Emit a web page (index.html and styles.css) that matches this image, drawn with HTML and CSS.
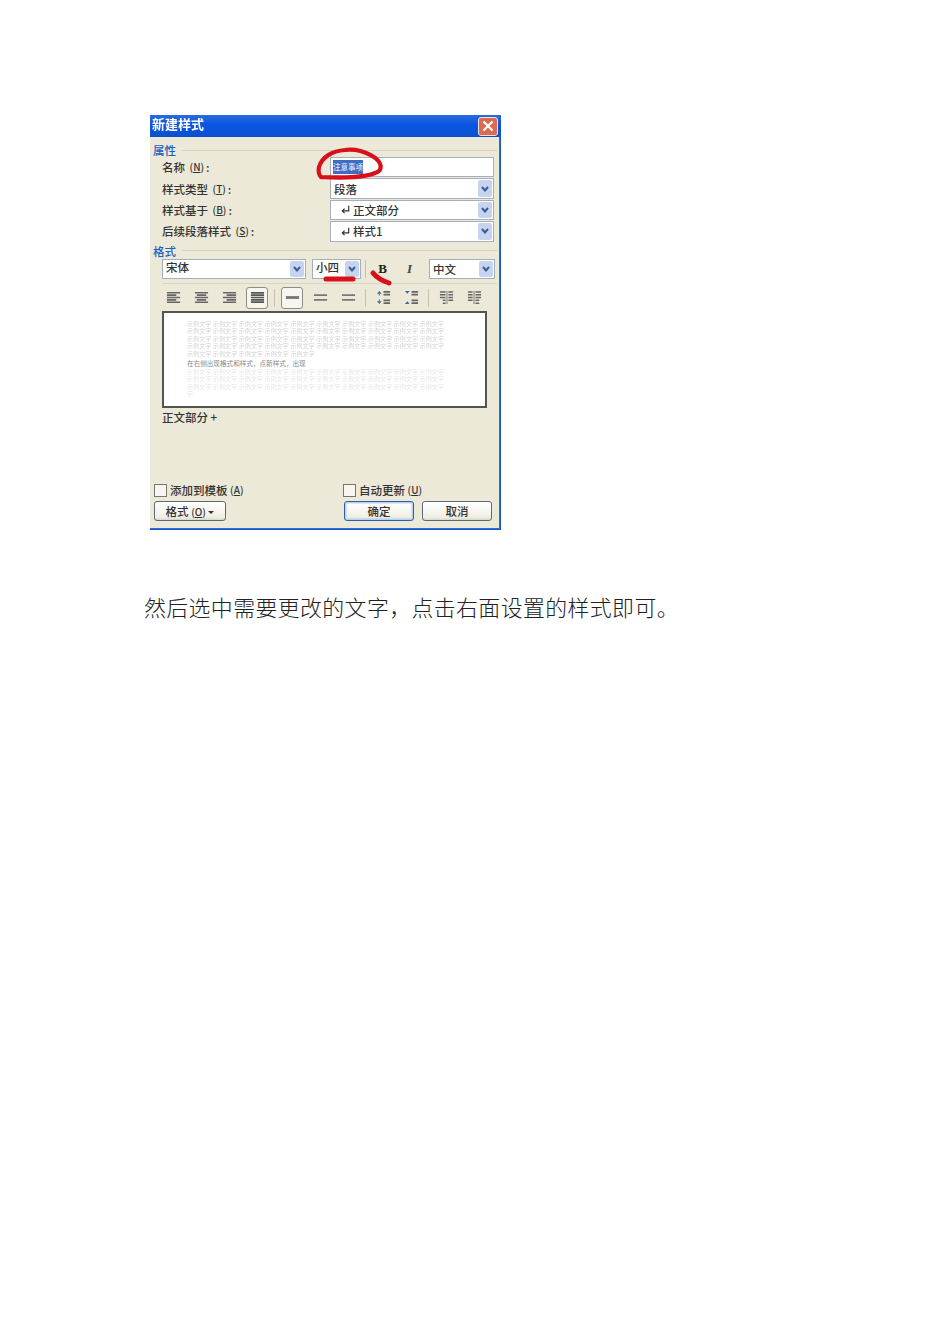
FILE: index.html
```html
<!DOCTYPE html>
<html lang="zh">

<head>
  <meta charset="UTF-8">
  <meta name="viewport" content="width=device-width, initial-scale=1.0">
  <title>新建样式</title>
  <link rel="stylesheet" href="styles.css">
</head>

<body>
  <svg class="icon-defs" width="0" height="0">
    <symbol id="chevron" viewBox="0 0 10 10">
      <path d="M2 3 L5 6.5 L8 3" fill="none" stroke="#3a5a9a" stroke-width="2" />
    </symbol>
    <symbol id="return" viewBox="0 0 12 12">
      <path d="M9.5 2 V7.5 H3 M5 5 L2.5 7.5 L5 10" fill="none" stroke="#333" stroke-width="1.3" />
    </symbol>
    <symbol id="align-left" viewBox="0 0 16 14">
      <path d="M1 2 H15 M1 4.5 H11 M1 7 H15 M1 9.5 H11 M1 12 H15" stroke="#666" stroke-width="1.7" />
    </symbol>
    <symbol id="align-center" viewBox="0 0 16 14">
      <path d="M1 2 H15 M3 4.5 H13 M1 7 H15 M3 9.5 H13 M1 12 H15" stroke="#666" stroke-width="1.7" />
    </symbol>
    <symbol id="align-right" viewBox="0 0 16 14">
      <path d="M1 2 H15 M5 4.5 H15 M1 7 H15 M5 9.5 H15 M1 12 H15" stroke="#666" stroke-width="1.7" />
    </symbol>
    <symbol id="align-full" viewBox="0 0 16 14">
      <path d="M1 2 H15 M1 4.5 H15 M1 7 H15 M1 9.5 H15 M1 12 H15" stroke="#555" stroke-width="1.8" />
    </symbol>
    <symbol id="space-one" viewBox="0 0 16 14">
      <path d="M1 7 H15" stroke="#777" stroke-width="3" />
    </symbol>
    <symbol id="space-two" viewBox="0 0 16 14">
      <path d="M1 4.5 H15 M1 9.5 H15" stroke="#777" stroke-width="1.8" />
    </symbol>
    <symbol id="para-up" viewBox="0 0 16 16">
      <path d="M8 2 H15 M8 5 H15 M8 11 H15 M8 14 H15" stroke="#666" stroke-width="1.8" />
      <path d="M1 4 L3.5 1 L6 4 Z M1 12 L3.5 15 L6 12 Z" fill="#3f6a8f" />
      <path d="M3.5 4 V6 M3.5 10 V12" stroke="#3f6a8f" />
    </symbol>
    <symbol id="para-down" viewBox="0 0 16 16">
      <path d="M8 2 H15 M8 5 H15 M8 11 H15 M8 14 H15" stroke="#666" stroke-width="1.8" />
      <path d="M1 1 L3.5 4 L6 1 Z M1 15 L3.5 12 L6 15 Z" fill="#3f6a8f" />
    </symbol>
    <symbol id="indent-less" viewBox="0 0 16 16">
      <path d="M1 2 H7 M1 5 H7 M1 8 H7 M4 11 H7 M4 14 H7 M10 2 H15 M10 5 H15 M10 8 H15 M10 11 H15" stroke="#666" stroke-width="1.6" />
      <path d="M8.5 1 V15" stroke="#777" />
    </symbol>
    <symbol id="indent-more" viewBox="0 0 16 16">
      <path d="M1 2 H6 M1 5 H6 M1 8 H6 M1 11 H6 M9 2 H15 M9 5 H15 M9 8 H15 M9 11 H13 M9 14 H13" stroke="#666" stroke-width="1.6" />
      <path d="M7.5 1 V15" stroke="#777" />
    </symbol>
  </svg>

  <div class="page">
    <div class="dialog">
      <div class="title-bar">
        <span class="title">新建样式</span>
        <span class="close-btn">
          <svg viewBox="0 0 12 12" width="12" height="12">
            <path d="M1.5 1.5 L10.5 10.5 M10.5 1.5 L1.5 10.5" stroke="#fff" stroke-width="2.2" />
          </svg>
        </span>
      </div>

      <div class="dialog-body">
        <div class="legend"><span>属性</span></div>
        <div class="fields">
          <label>名称 <small>(<u>N</u>)</small>:</label>
          <div class="input"><span class="selected">注意事项</span></div>
          <label>样式类型 <small>(<u>T</u>)</small>:</label>
          <div class="select"><span class="value">段落</span><span class="arrow"><svg><use href="#chevron" /></svg></span></div>
          <label>样式基于 <small>(<u>B</u>)</small>:</label>
          <div class="select"><span class="value indented"><svg class="ret"><use href="#return" /></svg>正文部分</span><span class="arrow"><svg><use href="#chevron" /></svg></span></div>
          <label>后续段落样式 <small>(<u>S</u>)</small>:</label>
          <div class="select"><span class="value indented"><svg class="ret"><use href="#return" /></svg>样式1</span><span class="arrow"><svg><use href="#chevron" /></svg></span></div>
        </div>

        <div class="legend legend-format"><span>格式</span></div>
        <div class="font-row">
          <div class="select font-name"><span class="value raised">宋体</span><span class="arrow"><svg><use href="#chevron" /></svg></span></div>
          <div class="select font-size"><span class="value raised">小四</span><span class="arrow"><svg><use href="#chevron" /></svg></span></div>
          <span class="sep"></span>
          <span class="style-btn bold">B</span>
          <span class="style-btn italic">I</span>
          <div class="select font-lang"><span class="value">中文</span><span class="arrow"><svg><use href="#chevron" /></svg></span></div>
        </div>
        <div class="rule"></div>

        <div class="toolbar">
          <span class="tool"><svg><use href="#align-left" /></svg></span>
          <span class="tool"><svg><use href="#align-center" /></svg></span>
          <span class="tool"><svg><use href="#align-right" /></svg></span>
          <span class="tool active"><svg><use href="#align-full" /></svg></span>
          <span class="sep"></span>
          <span class="tool active"><svg><use href="#space-one" /></svg></span>
          <span class="tool"><svg><use href="#space-two" /></svg></span>
          <span class="tool"><svg><use href="#space-two" /></svg></span>
          <span class="sep"></span>
          <span class="tool"><svg><use href="#para-up" /></svg></span>
          <span class="tool"><svg><use href="#para-down" /></svg></span>
          <span class="sep"></span>
          <span class="tool"><svg><use href="#indent-less" /></svg></span>
          <span class="tool"><svg><use href="#indent-more" /></svg></span>
        </div>

        <div class="preview">
          <p class="ghost">示例文字 示例文字 示例文字 示例文字 示例文字 示例文字 示例文字 示例文字 示例文字 示例文字</p>
          <p class="ghost">示例文字 示例文字 示例文字 示例文字 示例文字 示例文字 示例文字 示例文字 示例文字 示例文字</p>
          <p class="ghost">示例文字 示例文字 示例文字 示例文字 示例文字 示例文字 示例文字 示例文字 示例文字 示例文字</p>
          <p class="ghost">示例文字 示例文字 示例文字 示例文字 示例文字 示例文字 示例文字 示例文字 示例文字 示例文字</p>
          <p class="ghost">示例文字 示例文字 示例文字 示例文字 示例文字</p>
          <p class="sample">在右侧出现格式和样式，点新样式，出现</p>
          <p class="ghost pale">示例文字 示例文字 示例文字 示例文字 示例文字 示例文字 示例文字 示例文字 示例文字 示例文字</p>
          <p class="ghost pale">示例文字 示例文字 示例文字 示例文字 示例文字 示例文字 示例文字 示例文字 示例文字 示例文字</p>
          <p class="ghost pale">示例文字 示例文字 示例文字 示例文字 示例文字 示例文字 示例文字 示例文字 示例文字 示例文字</p>
          <p class="ghost pale">字</p>
        </div>

        <div class="description">正文部分 +</div>

        <div class="footer">
          <label class="check"><span class="box"></span>添加到模板 <small>(<u>A</u>)</small></label>
          <label class="check"><span class="box"></span>自动更新 <small>(<u>U</u>)</small></label>
          <button class="btn btn-format">格式 <small>(<u>O</u>)</small> <span class="caret"></span></button>
          <div class="btn-group">
            <button class="btn btn-default">确定</button>
            <button class="btn">取消</button>
          </div>
        </div>
      </div>

      <!-- 红笔标记 -->
      <svg class="marks" viewBox="0 0 351 415" width="351" height="415">
        <path d="M171 62 C190 63 222 63 230 55 C235 44 212 33 195 35 C182 36 172 42 169 52 C168 57 169 60 171 62"
          fill="none" stroke="#d8101a" stroke-width="4.2" stroke-linecap="round" />
        <path d="M176 164 H203" stroke="#d8101a" stroke-width="5" stroke-linecap="round" />
        <path d="M223 158 C227 163 233 166 239 168" fill="none" stroke="#d8101a" stroke-width="5" stroke-linecap="round" />
      </svg>
    </div>

    <p class="doc-text">然后选中需要更改的文字，点击右面设置的样式即可。</p>
  </div>
</body>

</html>
```

FILE: styles.css
```css
* {
  margin: 0;
  padding: 0;
  box-sizing: border-box;
}

body {
  background: #fff;
  font-family: 'Noto Sans CJK SC', 'Liberation Sans', sans-serif;
}

.icon-defs {
  position: absolute;
}

.page {
  height: 1344px;
  padding-top: 115px;
}

/* 对话框截图 */
.dialog {
  position: relative;
  width: 351px;
  height: 415px;
  margin-left: 150px;
  display: flex;
  flex-direction: column;
  filter: blur(0.6px);
  font-size: 11.5px;
  font-weight: 500;
  line-height: 14px;
  color: #333;
}

.title-bar {
  height: 22px;
  flex: none;
  display: flex;
  align-items: center;
  justify-content: space-between;
  padding: 0 3px 0 2px;
  background: linear-gradient(180deg, #2a6be0 0%, #0a55e0 45%, #0b50d0 100%);
}

.title {
  color: #fff;
  font-weight: 700;
  font-size: 13px;
  margin-top: -4px;
}

.close-btn {
  width: 20px;
  height: 19px;
  display: flex;
  align-items: center;
  justify-content: center;
  border: 1px solid #e6e6e6;
  border-radius: 3px;
  background: #dd6a50;
}

.dialog-body {
  flex: 1;
  display: flex;
  flex-direction: column;
  padding: 6px 3px 8px 3px;
  background: #ece9d8;
  border: solid #1a55c8;
  border-width: 0 1px 1px 0;
  box-shadow: inset 0 -1px 0 #2f6fd0, inset -1px 0 0 #2f6fd0;
}

.legend {
  height: 14px;
  display: flex;
  align-items: center;
  gap: 6px;
  color: #1c5fc0;
}

.legend::after {
  content: '';
  flex: 1;
  height: 1px;
  background: #d3d0bf;
}

.legend-format {
  margin-top: 2px;
}

.fields {
  display: grid;
  grid-template-columns: 168px 164px;
  grid-auto-rows: 20.4px;
  row-gap: 1px;
  align-items: stretch;
  padding-left: 9px;
}

.fields label {
  display: flex;
  align-items: center;
  gap: 2px;
  white-space: pre;
}

small {
  font-size: 10px;
}

.input,
.select {
  display: flex;
  align-items: center;
  background: #fff;
  border: 1px solid #a5aebc;
}

.input {
  padding-left: 2px;
}

.selected {
  padding: 1px 0;
  background: #3d6cc0;
  color: #dfe8fa;
  font-size: 7.5px;
  line-height: 12px;
}

.value {
  flex: 1;
  padding-left: 3px;
  display: flex;
  align-items: center;
  white-space: nowrap;
}

.indented {
  padding-left: 9px;
}

.raised {
  padding-bottom: 3px;
}

.ret {
  width: 11px;
  height: 11px;
  margin-right: 2px;
}

.arrow {
  width: 14px;
  align-self: stretch;
  margin: 1px;
  display: flex;
  align-items: center;
  justify-content: center;
  background: #c6d4f0;
  border-radius: 2px;
}

.arrow svg {
  width: 10px;
  height: 10px;
}

.font-row {
  height: 20px;
  margin-top: 1px;
  padding-left: 9px;
  display: flex;
  align-items: stretch;
}

.font-row > * {
  flex: none;
}

.font-name {
  width: 144px;
}

.font-size {
  width: 49px;
  margin-left: 6px;
}

.font-lang {
  width: 66px;
  margin-left: 6px;
}

.font-row .sep {
  margin: 1px 0 1px 4px;
}

.style-btn {
  width: 27px;
  display: flex;
  align-items: center;
  justify-content: center;
  font-family: 'Liberation Serif', serif;
  font-weight: 700;
  font-size: 13px;
}

.bold {
  margin-left: 3px;
  color: #222;
}

.italic {
  font-style: italic;
  color: #444;
}

.sep {
  width: 1px;
  flex: none;
  background: #c5c2b2;
}

.rule {
  height: 1px;
  margin: 4px 0 0 9px;
  background: #d8d5c5;
}

.toolbar {
  height: 22px;
  margin: 3px 0 2px 9px;
  display: flex;
  align-items: stretch;
}

.tool {
  width: 22px;
  margin-right: 6px;
  display: flex;
  align-items: center;
  justify-content: center;
  border: 1px solid transparent;
}

.tool svg {
  width: 15px;
  height: 15px;
}

.tool.active {
  background: #f6f5ee;
  border-color: #8d8d85;
  border-radius: 3px;
}

.toolbar .sep {
  margin: 2px 6px 2px 0;
}

/* 预览区 */
.preview {
  width: 325px;
  height: 97px;
  margin-left: 9px;
  padding: 7px 30px 0 23px;
  background: #fff;
  border: 2px solid #55554d;
}

.preview p {
  white-space: nowrap;
}

.ghost {
  height: 7.6px;
  font-size: 6px;
  font-weight: 400;
  line-height: 7.6px;
  color: #d2d2d2;
  letter-spacing: 0.1px;
  filter: blur(0.5px);
}

.pale {
  color: #e6e6e6;
}

.sample {
  height: 9px;
  margin-top: 1px;
  font-size: 6.6px;
  font-weight: 400;
  line-height: 9px;
  color: #888;
}

.description {
  margin: 2px 0 0 9px;
}

.footer {
  margin-top: auto;
  display: grid;
  grid-template-columns: 189px 150px;
  grid-template-rows: 14px 20px;
  row-gap: 4px;
  padding-left: 1px;
}

.check {
  display: flex;
  align-items: center;
  white-space: pre;
}

.box {
  width: 13px;
  height: 13px;
  margin-right: 3px;
  background: #f7f6f0;
  border: 1px solid #77776f;
}

.btn {
  height: 20px;
  background: linear-gradient(180deg, #fff 0%, #f0efe6 85%, #d8d5c5 100%);
  border: 1px solid #5d6b78;
  border-radius: 3px;
  font: inherit;
  color: inherit;
}

.btn-format {
  width: 72px;
}

.caret {
  display: inline-block;
  border: 3px solid transparent;
  border-top-color: #333;
  border-bottom-width: 0;
  vertical-align: middle;
}

.btn-group {
  display: flex;
  gap: 8px;
  margin-left: 1px;
}

.btn-group .btn {
  width: 70px;
}

.btn-default {
  border-color: #2f5fa8;
  box-shadow: inset 0 0 0 1.5px #bcd0ee;
}

.marks {
  position: absolute;
  top: 0;
  left: 0;
  pointer-events: none;
}

/* 正文 */
.doc-text {
  margin: 62px 0 0 144px;
  font-size: 21.9px;
  line-height: 30px;
  font-weight: 300;
  letter-spacing: 0.4px;
  color: #222;
  white-space: nowrap;
}
```
